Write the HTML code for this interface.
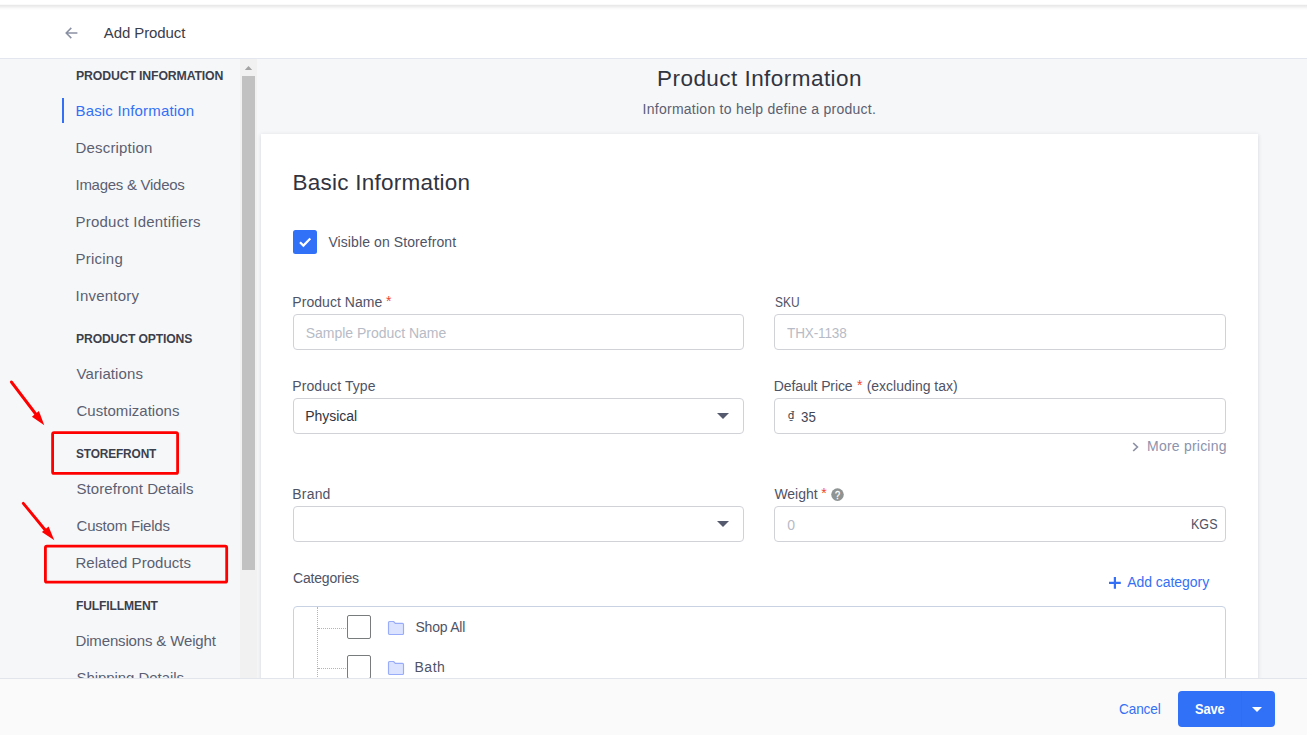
<!DOCTYPE html>
<html lang="en">
<head>
<meta charset="utf-8">
<title>Add Product</title>
<style>
*{box-sizing:border-box;margin:0;padding:0}
html,body{width:1307px;height:735px;overflow:hidden}
body{position:relative;background:#f6f7f9;font-family:"Liberation Sans",sans-serif;-webkit-font-smoothing:antialiased}
.t{position:absolute;white-space:nowrap;transform-origin:0 50%}
.abs{position:absolute}
#hdr{left:0;top:0;width:1307px;height:59px;background:#fff;border-bottom:1px solid #e3e6ee}
#topshadow{left:0;top:4px;width:1307px;height:6px;background:linear-gradient(to bottom,rgba(0,0,0,.02) 0,rgba(0,0,0,.02) 16%,rgba(0,0,0,.095) 17%,rgba(0,0,0,.07) 40%,rgba(0,0,0,.02) 75%,rgba(0,0,0,0) 100%)}
#side{left:0;top:59px;width:240px;height:619px;overflow:hidden}
#side .in{position:absolute;left:0;top:-59px;width:240px;height:735px}
#bar{left:62px;top:98px;width:2px;height:25px;background:#3370f5}
#sbtrack{left:240px;top:59px;width:17px;height:619px;background:#f1f1f1}
#sbthumb{left:242px;top:76px;width:13px;height:494px;background:#c1c1c1}
#main{left:257px;top:59px;width:1050px;height:619px;overflow:hidden}
#main .in{position:absolute;left:-257px;top:-59px;width:1307px;height:735px}
#card{left:261px;top:134px;width:997px;height:620px;background:#fff;box-shadow:0 1px 4px rgba(49,52,64,.17)}
.inp{position:absolute;height:36px;border:1px solid #d1d2d8;border-radius:4px;background:#fff}
.cb{position:absolute;width:24px;height:24px;border:1px solid #787c7c;border-radius:2px;background:#fff}
#catbox{left:293px;top:606px;width:933px;height:200px;border:1px solid #c9d2e3;border-radius:4px;background:#fff}
.dotv{position:absolute;width:0;border-left:1px dotted #b4b4b4}
.doth{position:absolute;height:0;border-top:1px dotted #b4b4b4}
#foot{left:0;top:678px;width:1307px;height:57px;background:#fafafa;border-top:1px solid #e2e5ec}
#save{left:1178px;top:691px;width:97px;height:36px;border-radius:4px;background:#3171f7}
svg{position:absolute;overflow:visible}
</style>
</head>
<body>
<header class="abs" id="hdr"></header>
<div class="abs" id="topshadow"></div>
<svg style="left:64px;top:25px" width="16" height="16" viewBox="0 0 16 16"><path d="M13.4 8H2.4M7.3 2.9L2.2 8l5.1 5.1" fill="none" stroke="#8a90a4" stroke-width="1.5"/></svg>
<span class="t" style="left:103.80px;top:22px;line-height:21px;height:21px;font-size:15px;color:#3a3d4a;letter-spacing:-0.098px;">Add Product</span>

<nav class="abs" id="side"><div class="in">
<div class="abs" id="bar"></div>
<span class="t" style="left:76.30px;top:66px;line-height:19px;height:19px;font-size:13px;color:#3c3f4c;letter-spacing:-0.150px;font-weight:700;transform:scaleX(0.9451);">PRODUCT INFORMATION</span>
<span class="t" style="left:76.30px;top:329px;line-height:19px;height:19px;font-size:13px;color:#3c3f4c;letter-spacing:-0.150px;font-weight:700;transform:scaleX(0.9364);">PRODUCT OPTIONS</span>
<span class="t" style="left:76.30px;top:444px;line-height:19px;height:19px;font-size:13px;color:#3c3f4c;letter-spacing:-0.150px;font-weight:700;transform:scaleX(0.9134);">STOREFRONT</span>
<span class="t" style="left:76.30px;top:596px;line-height:19px;height:19px;font-size:13px;color:#3c3f4c;letter-spacing:-0.150px;font-weight:700;transform:scaleX(0.9308);">FULFILLMENT</span>
<span class="t" style="left:75.50px;top:100px;line-height:21px;height:21px;font-size:15px;color:#3370f5;letter-spacing:0.172px;">Basic Information</span>
<span class="t" style="left:75.50px;top:137px;line-height:21px;height:21px;font-size:15px;color:#5b5f71;letter-spacing:0.181px;">Description</span>
<span class="t" style="left:75.50px;top:174px;line-height:21px;height:21px;font-size:15px;color:#5b5f71;letter-spacing:-0.273px;">Images &amp; Videos</span>
<span class="t" style="left:75.50px;top:211px;line-height:21px;height:21px;font-size:15px;color:#5b5f71;letter-spacing:0.234px;">Product Identifiers</span>
<span class="t" style="left:75.50px;top:248px;line-height:21px;height:21px;font-size:15px;color:#5b5f71;letter-spacing:0.232px;">Pricing</span>
<span class="t" style="left:75.50px;top:285px;line-height:21px;height:21px;font-size:15px;color:#5b5f71;letter-spacing:0.225px;">Inventory</span>
<span class="t" style="left:76.50px;top:363px;line-height:21px;height:21px;font-size:15px;color:#5b5f71;letter-spacing:0.090px;">Variations</span>
<span class="t" style="left:76.50px;top:400px;line-height:21px;height:21px;font-size:15px;color:#5b5f71;letter-spacing:0.035px;">Customizations</span>
<span class="t" style="left:76.50px;top:478px;line-height:21px;height:21px;font-size:15px;color:#5b5f71;letter-spacing:0.060px;">Storefront Details</span>
<span class="t" style="left:76.50px;top:515px;line-height:21px;height:21px;font-size:15px;color:#5b5f71;letter-spacing:-0.197px;">Custom Fields</span>
<span class="t" style="left:75.50px;top:552px;line-height:21px;height:21px;font-size:15px;color:#5b5f71;letter-spacing:0.029px;">Related Products</span>
<span class="t" style="left:75.50px;top:630px;line-height:21px;height:21px;font-size:15px;color:#5b5f71;letter-spacing:-0.153px;">Dimensions &amp; Weight</span>
<span class="t" style="left:76.50px;top:667px;line-height:21px;height:21px;font-size:15px;color:#5b5f71;letter-spacing:-0.060px;">Shipping Details</span>
</div></nav>

<div class="abs" id="sbtrack"></div>
<div class="abs" id="sbthumb"></div>
<svg style="left:240px;top:59px" width="17" height="17" viewBox="0 0 17 17"><path d="M4.8 11L8.5 7l3.7 4z" fill="#a3a3a3"/></svg>

<main class="abs" id="main"><div class="in">
<div class="abs" id="card"></div>
<div class="abs" style="left:293px;top:230px;width:24px;height:24px;border-radius:2.5px;background:#3171f7"></div>
<svg style="left:293px;top:230px" width="24" height="24" viewBox="0 0 24 24"><path d="M7 12.3l3.4 3.3 6.9-7" fill="none" stroke="#fff" stroke-width="2.2"/></svg>

<div class="inp" style="left:293px;top:314px;width:451px"></div>
<div class="inp" style="left:774px;top:314px;width:452px"></div>
<div class="inp" style="left:293px;top:398px;width:451px"></div>
<div class="inp" style="left:774px;top:398px;width:452px"></div>
<div class="inp" style="left:293px;top:506px;width:451px"></div>
<div class="inp" style="left:774px;top:506px;width:452px"></div>
<svg style="left:717px;top:413px" width="12" height="6" viewBox="0 0 12 6"><path d="M0 0h12L6 6z" fill="#555a6e"/></svg>
<svg style="left:717px;top:521px" width="12" height="6" viewBox="0 0 12 6"><path d="M0 0h12L6 6z" fill="#555a6e"/></svg>
<svg style="left:1131px;top:441px" width="10" height="12" viewBox="0 0 10 12"><path d="M2.2 2L6.4 6 2.2 10" fill="none" stroke="#8c91a6" stroke-width="1.7"/></svg>
<svg style="left:831px;top:488px" width="13" height="13" viewBox="0 0 13 13"><circle cx="6.5" cy="6.6" r="6.3" fill="#8e9393"/><text transform="translate(6.6 10.8) scale(.8 1)" x="0" y="0" text-anchor="middle" font-family="Liberation Sans, sans-serif" font-size="11.5" fill="#fff" stroke="#fff" stroke-width=".3">?</text></svg>
<svg style="left:1108px;top:576px" width="14" height="14" viewBox="0 0 14 14"><path d="M6.9 .9v11.8M1 6.8h11.8" fill="none" stroke="#3370f5" stroke-width="2.2"/></svg>

<div class="abs" id="catbox"></div>
<div class="dotv" style="left:317px;top:607px;height:80px"></div>
<div class="doth" style="left:318px;top:628px;width:28px"></div>
<div class="doth" style="left:318px;top:668px;width:28px"></div>
<div class="cb" style="left:347px;top:615px"></div>
<div class="cb" style="left:347px;top:655px"></div>
<svg style="left:388px;top:621px" width="16" height="14" viewBox="0 0 16 14"><path d="M1.5 .5h4.2l1.6 1.8h7.2a1 1 0 0 1 1 1v9.2a1 1 0 0 1-1 1h-13a1 1 0 0 1-1-1v-11a1 1 0 0 1 1-1z" fill="#dbe3fe" stroke="#98acfa" stroke-width="1.15"/></svg>
<svg style="left:388px;top:661px" width="16" height="14" viewBox="0 0 16 14"><path d="M1.5 .5h4.2l1.6 1.8h7.2a1 1 0 0 1 1 1v9.2a1 1 0 0 1-1 1h-13a1 1 0 0 1-1-1v-11a1 1 0 0 1 1-1z" fill="#dbe3fe" stroke="#98acfa" stroke-width="1.15"/></svg>
<span class="t" style="left:657.00px;top:64px;line-height:29px;height:29px;font-size:22.5px;color:#313440;letter-spacing:0.454px;">Product Information</span>
<span class="t" style="left:642.60px;top:99px;line-height:20px;height:20px;font-size:14px;color:#5b5f71;letter-spacing:0.254px;">Information to help define a product.</span>
<span class="t" style="left:292.60px;top:168px;line-height:29px;height:29px;font-size:22.5px;color:#313440;letter-spacing:0.230px;">Basic Information</span>
<span class="t" style="left:328.40px;top:232px;line-height:20px;height:20px;font-size:14px;color:#4f5366;letter-spacing:0.094px;">Visible on Storefront</span>
<span class="t" style="left:292.30px;top:292px;line-height:20px;height:20px;font-size:14px;color:#4f5366;letter-spacing:0.046px;">Product Name</span>
<span class="t" style="left:386.00px;top:291px;line-height:20px;height:20px;font-size:14px;color:#f0452f;">*</span>
<span class="t" style="left:305.80px;top:323px;line-height:20px;height:20px;font-size:14px;color:#b7bbc6;letter-spacing:-0.025px;">Sample Product Name</span>
<span class="t" style="left:774.80px;top:292px;line-height:20px;height:20px;font-size:14px;color:#4f5366;transform:scaleX(0.8544);">SKU</span>
<span class="t" style="left:787.00px;top:323px;line-height:20px;height:20px;font-size:14px;color:#b7bbc6;letter-spacing:-0.150px;transform:scaleX(0.9672);">THX-1138</span>
<span class="t" style="left:292.30px;top:376px;line-height:20px;height:20px;font-size:14px;color:#4f5366;letter-spacing:0.091px;">Product Type</span>
<span class="t" style="left:305.30px;top:406px;line-height:20px;height:20px;font-size:14px;color:#313440;letter-spacing:-0.032px;">Physical</span>
<span class="t" style="left:773.80px;top:376px;line-height:20px;height:20px;font-size:14px;color:#4f5366;letter-spacing:-0.113px;">Default Price</span>
<span class="t" style="left:857.00px;top:375px;line-height:20px;height:20px;font-size:14px;color:#f0452f;">*</span>
<span class="t" style="left:866.70px;top:376px;line-height:20px;height:20px;font-size:14px;color:#4f5366;letter-spacing:-0.006px;">(excluding tax)</span>
<span class="t" style="font-family:'DejaVu Sans',sans-serif;left:787.80px;top:407px;line-height:16px;height:16px;font-size:10.5px;color:#3a3d4a;">₫</span>
<span class="t" style="left:800.60px;top:407px;line-height:20px;height:20px;font-size:14px;color:#434654;transform:scaleX(0.9502);">35</span>
<span class="t" style="left:1147.00px;top:436px;line-height:20px;height:20px;font-size:14px;color:#8c93ad;letter-spacing:0.224px;">More pricing</span>
<span class="t" style="left:292.30px;top:484px;line-height:20px;height:20px;font-size:14px;color:#4f5366;letter-spacing:0.182px;">Brand</span>
<span class="t" style="left:774.40px;top:484px;line-height:20px;height:20px;font-size:14px;color:#4f5366;letter-spacing:-0.026px;">Weight</span>
<span class="t" style="left:821.20px;top:483px;line-height:20px;height:20px;font-size:14px;color:#f0452f;">*</span>
<span class="t" style="left:787.20px;top:515px;line-height:20px;height:20px;font-size:14px;color:#b7bbc6;">0</span>
<span class="t" style="left:1191.40px;top:514px;line-height:20px;height:20px;font-size:14px;color:#4f5366;transform:scaleX(0.8963);">KGS</span>
<span class="t" style="left:293.10px;top:568px;line-height:20px;height:20px;font-size:14px;color:#4f5366;letter-spacing:-0.200px;">Categories</span>
<span class="t" style="left:1127.20px;top:572px;line-height:20px;height:20px;font-size:14px;color:#3370f5;letter-spacing:-0.045px;">Add category</span>
<span class="t" style="left:415.50px;top:617px;line-height:20px;height:20px;font-size:14px;color:#4f5366;letter-spacing:-0.233px;">Shop All</span>
<span class="t" style="left:414.50px;top:657px;line-height:20px;height:20px;font-size:14px;color:#4f5366;letter-spacing:0.529px;">Bath</span>
</div></main>

<footer class="abs" id="foot"></footer>
<div class="abs" id="save"></div>
<div class="abs" style="left:1241px;top:691px;width:1px;height:36px;background:#2f6ef3"></div>
<svg style="left:1252px;top:707px" width="10" height="5" viewBox="0 0 10 5"><path d="M0 0h10L5 5z" fill="#fff"/></svg>
<span class="t" style="left:1119.30px;top:698px;line-height:21px;height:21px;font-size:15px;color:#3370f5;letter-spacing:-0.150px;transform:scaleX(0.9077);">Cancel</span>
<span class="t" style="left:1195.20px;top:699px;line-height:20px;height:20px;font-size:14px;color:#ffffff;letter-spacing:-0.150px;font-weight:700;transform:scaleX(0.9180);">Save</span>

<svg style="left:0;top:0" width="1307" height="735" viewBox="0 0 1307 735">
<rect x="52.6" y="432.6" width="125" height="40.8" rx="1.5" fill="none" stroke="#fe0000" stroke-width="2.8"/>
<rect x="45.4" y="546.2" width="181.3" height="36" rx="1.5" fill="none" stroke="#fe0000" stroke-width="2.8"/>
<path d="M11.4 382L36.5 415" stroke="#fe0000" stroke-width="2.9" stroke-linecap="round" fill="none"/>
<path d="M44.3 425.2L31.9 416.7l7-5.6z" fill="#fe0000"/>
<path d="M23.3 503.3L46 531" stroke="#fe0000" stroke-width="2.9" stroke-linecap="round" fill="none"/>
<path d="M54.3 540.2L41.9 531.9l6.7-5.5z" fill="#fe0000"/>
</svg>
</body>
</html>
